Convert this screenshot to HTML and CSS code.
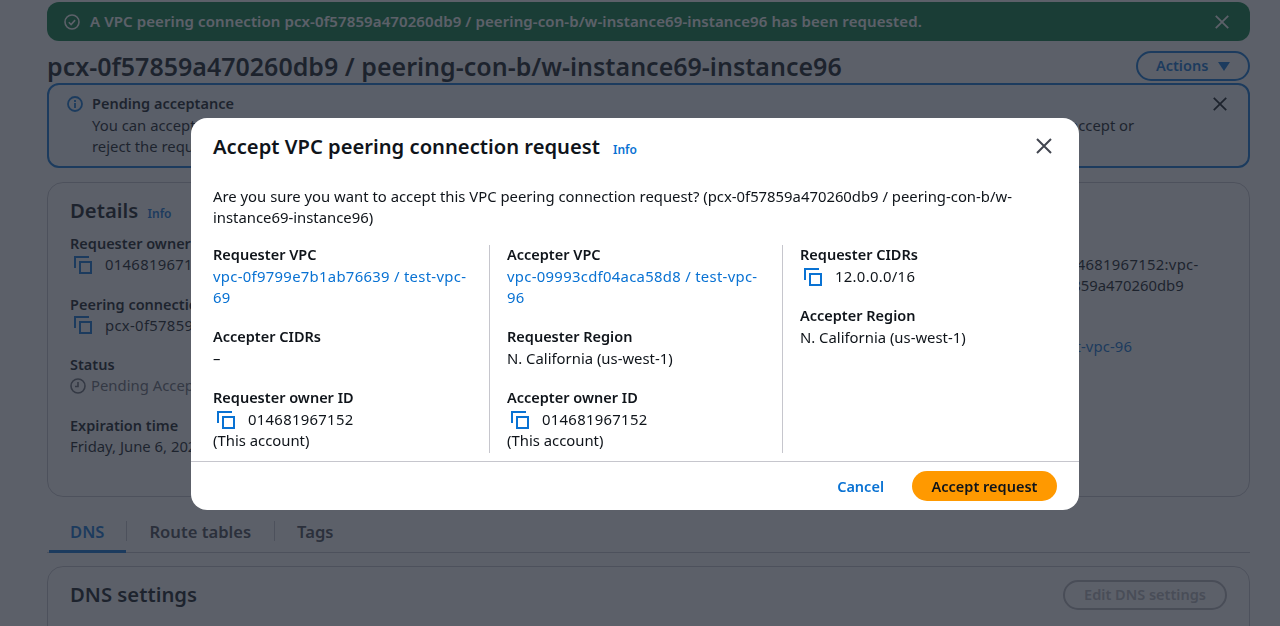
FILE: index.html

```html
<!DOCTYPE HTML>
<html>
<head>
<meta charset="utf-8">
<title>Accept VPC peering connection request</title>
<link rel="stylesheet" href="styles.css">
</head>

<body>
<svg class="defs">
	<symbol id="copy" viewBox="0 0 18 18">
		<path d="M1 12V1h14" fill="none" stroke="currentColor" stroke-width="2"/>
		<rect x="6" y="6" width="11" height="11" fill="none" stroke="currentColor" stroke-width="2"/>
	</symbol>
	<symbol id="close" viewBox="0 0 18 18">
		<path d="M2 2l14 14M16 2L2 16" fill="none" stroke="currentColor" stroke-width="2"/>
	</symbol>
</svg>

<div class="page">
	<div class="flash">
		<svg class="flash-icon" viewBox="0 0 16 16"><circle cx="8" cy="8" r="7" fill="none" stroke="currentColor" stroke-width="1.6"/><path d="M4.8 8.2l2.3 2.3 4-4.4" fill="none" stroke="currentColor" stroke-width="1.6"/></svg>
		<span class="flash-text">A VPC peering connection pcx-0f57859a470260db9 / peering-con-b/w-instance69-instance96 has been requested.</span>
		<svg class="flash-close"><use href="#close"/></svg>
	</div>

	<div class="title-row">
		<h1>pcx-0f57859a470260db9 / peering-con-b/w-instance69-instance96</h1>
		<button class="btn-actions">Actions <span class="caret"></span></button>
	</div>

	<div class="alert">
		<svg class="alert-icon" viewBox="0 0 16 16"><circle cx="8" cy="8" r="7" fill="none" stroke="currentColor" stroke-width="1.8"/><path d="M8 7v5M8 4v2" fill="none" stroke="currentColor" stroke-width="1.8"/></svg>
		<div class="alert-body">
			<b>Pending acceptance</b>
			<p>You can accept or reject this peering connection request using the Actions menu. You have until Friday, June 6, 2025 at 5:30:00 PM GMT+0 to accept or<br>reject the request before it expires.</p>
		</div>
		<svg class="alert-close"><use href="#close"/></svg>
	</div>

	<div class="card details">
		<h2>Details <a class="info">Info</a></h2>
		<div class="details-grid">
			<div class="details-col">
				<div class="kv"><b>Requester owner ID</b><span class="with-copy"><svg class="copy"><use href="#copy"/></svg>014681967152</span></div>
				<div class="kv"><b>Peering connection ID</b><span class="with-copy"><svg class="copy"><use href="#copy"/></svg>pcx-0f57859a470260db9</span></div>
				<div class="kv"><b>Status</b><span class="pending"><svg class="clock" viewBox="0 0 16 16"><circle cx="8" cy="8" r="7" fill="none" stroke="currentColor" stroke-width="1.6"/><path d="M8 4v4.5H5" fill="none" stroke="currentColor" stroke-width="1.6"/></svg>Pending Acceptance</span></div>
				<div class="kv"><b>Expiration time</b><span>Friday, June 6, 2025</span></div>
			</div>
			<div class="details-col right">
				<div class="kv"><b>ARN</b><span><span class="arn-line">arn:aws:ec2:us-west-1:014681967152:vpc-</span><br>peering-connection/pcx-0f57859a470260db9</span></div>
				<div class="kv"><b>Accepter VPC</b><a class="link">vpc-09993cdf04aca58d8 / test-vpc-96</a></div>
			</div>
		</div>
	</div>

	<div class="tabs">
		<a class="tab active">DNS</a>
		<a class="tab">Route tables</a>
		<a class="tab">Tags</a>
	</div>

	<div class="card dns">
		<h2>DNS settings</h2>
		<button class="btn-edit">Edit DNS settings</button>
	</div>
</div>

<div class="overlay">
	<div class="modal">
		<div class="modal-head">
			<h3>Accept VPC peering connection request</h3>
			<a class="info">Info</a>
			<svg class="modal-close"><use href="#close"/></svg>
		</div>
		<div class="modal-body">
			<p class="intro">Are you sure you want to accept this VPC peering connection request? (pcx-0f57859a470260db9 / peering-con-b/w-instance69-instance96)</p>
			<div class="cols">
				<div class="col">
					<div class="kv"><b>Requester VPC</b><a class="link">vpc-0f9799e7b1ab76639 / test-vpc-69</a></div>
					<div class="kv"><b>Accepter CIDRs</b><span>–</span></div>
					<div class="kv"><b>Requester owner ID</b><span class="with-copy"><svg class="copy"><use href="#copy"/></svg>014681967152</span><span>(This account)</span></div>
				</div>
				<div class="col">
					<div class="kv"><b>Accepter VPC</b><a class="link">vpc-09993cdf04aca58d8 / test-vpc-96</a></div>
					<div class="kv"><b>Requester Region</b><span>N. California (us-west-1)</span></div>
					<div class="kv"><b>Accepter owner ID</b><span class="with-copy"><svg class="copy"><use href="#copy"/></svg>014681967152</span><span>(This account)</span></div>
				</div>
				<div class="col">
					<div class="kv"><b>Requester CIDRs</b><span class="with-copy"><svg class="copy"><use href="#copy"/></svg>12.0.0.0/16</span></div>
					<div class="kv"><b>Accepter Region</b><span>N. California (us-west-1)</span></div>
				</div>
			</div>
		</div>
		<div class="modal-foot">
			<a class="cancel">Cancel</a>
			<button class="btn-primary">Accept request</button>
		</div>
	</div>
</div>
</body>
</html>
```

FILE: styles.css

```css
* {margin:0; padding:0; box-sizing:border-box;}
html, body {height:100%; overflow:hidden;}
body {background:#fff; color:#0f141a; font:14.85px/21px "Noto Sans", "Liberation Sans", sans-serif;}
button {font-family:inherit;}
b {font-weight:600; display:block; font-size:14.5px; line-height:20px; margin-bottom:1px;}
.defs {display:none;}

.page {height:626px; overflow:hidden; padding:2px 30px 0 47px;}

.flash {height:39px; background:#03793a; border-radius:12px; color:#fff; display:flex; align-items:center; padding:0 20px 0 17px; font-weight:600; font-size:15px; letter-spacing:.1px;}
.flash-icon {width:16px; height:16px; margin-right:10px;}
.flash-text {flex:1;}
.flash-close {width:16px; height:16px;}

.title-row {display:flex; justify-content:space-between; align-items:center; height:42px; padding-top:8px;}
h1 {font-size:25px; line-height:32px; font-weight:600; color:#0f141a;}
.btn-actions {width:114px; height:30px; background:#fff; border:2px solid #0972d3; border-radius:16px; color:#0972d3; font-size:14.5px; font-weight:600; padding-bottom:2px;}
.caret {display:inline-block; margin-left:6px; border:6px solid transparent; border-top:9px solid #0972d3; border-bottom:0;}

.alert {height:85px; border:2px solid #0972d3; border-radius:12px; background:#f5fbff; display:flex; padding:8px 20px 0 18px;}
.alert-icon {width:16px; height:16px; color:#0972d3; margin:3px 9px 0 0; flex:none;}
.alert-body {flex:1;}
.alert-body b {margin-bottom:2px;}
.alert-close {width:16px; height:16px; margin-top:3px;}

.card {border:1px solid #c6c6cd; border-radius:16px; background:#fff; margin-top:14px; padding:14px 22px;}
.details {height:315px;}
h2 {font-size:20.3px; line-height:26px; font-weight:600;}
.info {font-size:12px; font-weight:600; color:#0972d3; margin-left:4px;}
.details-grid {display:flex; margin-top:6px;}
.details-col {width:801px;}
.details-col.right {width:350px;}
.details .kv {margin-bottom:18.5px;}
.arn-line {letter-spacing:.3px; padding-left:24px;}
.details .link {letter-spacing:.1px;}
.with-copy {display:flex; align-items:center; letter-spacing:.3px;}
.copy {width:18px; height:18px; color:#0972d3; margin:0 13px 0 4px; flex:none;}
.pending {display:flex; align-items:center; color:#656871;}
.clock {width:16px; height:16px; margin-right:5px;}
.link {color:#0972d3; letter-spacing:.3px;}

.tabs {display:flex; height:35px; margin-top:21px; border-bottom:1px solid #c6c6cd; font-size:16.6px; font-weight:600; color:#424650;}
.tab {padding:0 23px; line-height:28px; position:relative;}
.tab.active {color:#0972d3; border-bottom:3px solid #0972d3; height:35px; margin-left:2px; padding:0 22px 0 21px;}
.tab + .tab::before {content:""; position:absolute; left:0; top:3px; height:20px; border-left:1px solid #c6c6cd;}

.dns {height:120px; display:flex; justify-content:space-between; margin-top:13px; padding-top:14px;}
.btn-edit {width:164px; height:30px; margin-top:-1px; background:#fff; border:2px solid #b4b4bb; border-radius:16px; color:#b4b4bb; font-size:14.5px; font-weight:600; padding-bottom:2px;}

.overlay {position:fixed; left:0; top:0; right:0; bottom:0; background:rgba(35,41,52,.74); display:flex; align-items:center; justify-content:center; padding:2px 10px 0 0;}
.modal {width:888px; height:392px; background:#fff; border-radius:16px; display:flex; flex-direction:column;}
.modal-head {display:flex; align-items:flex-start; height:68px; padding:15px 26px 0 22px;}
h3 {font-size:20.2px; line-height:26px; font-weight:600;}
.modal-head .info {margin:6px 0 0 13px; flex:1;}
.modal-close {width:18px; height:18px; color:#424650; margin-top:4px;}
.modal-body {flex:1; padding:0 22px;}
.intro {margin-bottom:17px;}
.cols {display:grid; grid-template-columns:276px 293px 1fr; height:208px;}
.col {display:flex; flex-direction:column; gap:19px; padding-right:14px;}
.col + .col {border-left:1px solid #c6c6cd; padding-left:17px;}
.col b {line-height:19px; margin-bottom:2px;}
.kv > * {display:block;}
.kv > .with-copy, .kv > .pending {display:flex;}
.modal-foot {height:49px; border-top:1px solid #c6c6cd; display:flex; align-items:center; justify-content:flex-end; padding:0 22px; font-weight:600; font-size:14.5px;}
.cancel {color:#0972d3; margin-right:28px;}
.btn-primary {width:145px; height:30px; border:0; border-radius:16px; background:#ff9900; color:#0f141a; font-size:14.5px; font-weight:600;}
```
